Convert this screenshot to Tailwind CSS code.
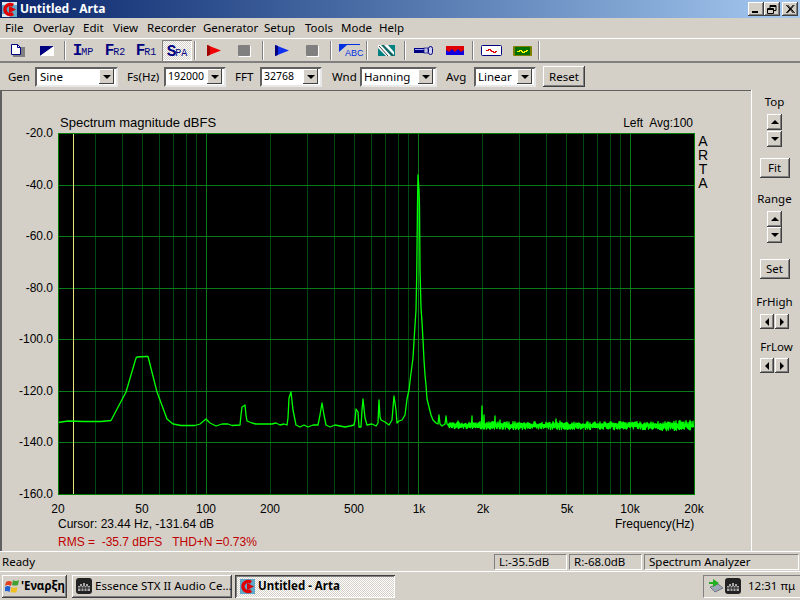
<!DOCTYPE html>
<html lang="en">
<head>
<meta charset="UTF-8">
<title>Untitled - Arta</title>
<script src="https://cdn.jsdelivr.net/npm/@tailwindcss/browser@4"></script>
</head>
<body class="m-0">
<div class="w-[800px] h-[600px] overflow-hidden flex flex-col bg-[#d4d0c8] text-black text-[11.5px] leading-none font-['Noto_Sans','Liberation_Sans',sans-serif]">

  <!-- title bar -->
  <div class="h-[18px] flex items-center pl-[2px] pr-[2px] bg-gradient-to-r from-[#0a246a] to-[#a6caf0]">
    <svg width="15" height="15" viewBox="0 0 15 15" class="mr-[3px]"><rect width="15" height="15" fill="#5fa8c8"/><path d="M0 0h15v3H0zM0 12h8v3H0z" fill="#d8e8f0"/><path d="M11 3.500A5 5 0 1 0 11 11.500" fill="none" stroke="#e00000" stroke-width="3.500"/><path d="M7 4l7 3.500L7 11z" fill="#e00000"/></svg>
    <span class="text-white font-bold text-[12px]">Untitled - Arta</span>
    <div class="ml-auto flex">
      <div class="w-[16px] h-[14px] bg-[#d4d0c8] shadow-[inset_-1px_-1px_0_#404040,inset_1px_1px_0_#fff,inset_-2px_-2px_0_#808080] relative"><div class="absolute left-[4px] top-[9px] w-[6px] h-[2px] bg-black"></div></div>
      <div class="w-[16px] h-[14px] bg-[#d4d0c8] shadow-[inset_-1px_-1px_0_#404040,inset_1px_1px_0_#fff,inset_-2px_-2px_0_#808080] flex items-center justify-center"><svg width="10" height="9" viewBox="0 0 10 9"><path d="M3 0.500h6v5H7M3 1.500h6M0.500 3.500h6v5h-6zM0.500 4.500h6M3 .5v3" fill="none" stroke="#000"/></svg></div>
      <div class="ml-[2px] w-[16px] h-[14px] bg-[#d4d0c8] shadow-[inset_-1px_-1px_0_#404040,inset_1px_1px_0_#fff,inset_-2px_-2px_0_#808080] flex items-center justify-center"><svg width="9" height="8" viewBox="0 0 9 8"><path d="M1 0l7 8M2.400 0l7 8M8 0L1 8M9 0L2 8" stroke="#000" fill="none" transform="translate(-.7 0)"/></svg></div>
    </div>
  </div>

  <!-- menu -->
  <div class="h-[21px] flex items-center pl-[5px] border-b border-white">
    <span class="w-[28px]">File</span><span class="w-[50px]">Overlay</span><span class="w-[30px]">Edit</span><span class="w-[34px]">View</span><span class="w-[56px]">Recorder</span><span class="w-[61px]">Generator</span><span class="w-[41px]">Setup</span><span class="w-[36px]">Tools</span><span class="w-[38px]">Mode</span><span>Help</span>
  </div>

  <!-- toolbar -->
  <div class="h-[24px] flex items-center pl-[2px] border-b-2 border-t border-t-[#d4d0c8] border-b-[#808080] text-[#000080]">
    <div class="w-[30px] flex justify-center"><svg width="15" height="13" viewBox="0 0 15 13"><path d="M3 3h12v10H3z" fill="#808080"/><path d="M1.500.5h6l3 3v7h-9z" fill="#fff" stroke="#000080"/><path d="M7.500.5v3h3" fill="none" stroke="#000080"/></svg></div>
    <div class="w-[30px] flex justify-center"><svg width="14" height="10" viewBox="0 0 14 10"><path d="M0 0h14L0 10z" fill="#000080"/><path d="M14 0v10H0z" fill="#fff"/></svg></div>
    <div class="w-[6px] flex justify-center"><div class="w-[2px] h-[19px] border-l border-l-[#808080] border-r border-r-white"></div></div>
    <div class="w-[30px] flex justify-center items-baseline font-bold font-['Liberation_Mono',monospace] text-[16px]">I<span class="text-[10px] font-normal -ml-[1px]">MP</span></div>
    <div class="w-[32px] ml-[1px] flex justify-center items-baseline font-bold font-['Liberation_Mono',monospace] text-[16px]">F<span class="text-[10px] font-normal -ml-[1px]">R2</span></div>
    <div class="w-[30px] flex justify-center items-baseline font-bold font-['Liberation_Mono',monospace] text-[16px]">F<span class="text-[10px] font-normal -ml-[1px]">R1</span></div>
    <div class="w-[30px] ml-[1px] h-[21px] flex justify-center items-baseline pt-[4px] font-bold font-['Liberation_Mono',monospace] text-[16px] bg-[repeating-conic-gradient(#fff_0_25%,#d4d0c8_0_50%)] bg-[length:2px_2px] shadow-[inset_1px_1px_0_#808080,inset_-1px_-1px_0_#fff]"><span>S</span><span class="text-[10px] font-normal -ml-[1px]">PA</span></div>
    <div class="w-[6px] flex justify-center"><div class="w-[2px] h-[19px] border-l border-l-[#808080] border-r border-r-white"></div></div>
    <div class="w-[31px] flex justify-center"><svg width="14" height="11" viewBox="0 0 14 11"><path d="M0 0l14 5.500L0 11z" fill="#f00000"/><path d="M0 0v11l3-1V1z" fill="#a00000"/></svg></div>
    <div class="w-[31px] flex justify-center"><svg width="13" height="12" viewBox="0 0 13 12"><rect x="1" y="1" width="12" height="11" fill="#fff"/><rect width="12" height="11" rx="1" fill="#808080"/></svg></div>
    <div class="w-[6px] flex justify-center"><div class="w-[2px] h-[19px] border-l border-l-[#808080] border-r border-r-white"></div></div>
    <div class="w-[31px] flex justify-center"><svg width="14" height="11" viewBox="0 0 14 11"><path d="M0 0l14 5.500L0 11z" fill="#1030f0"/><path d="M0 0v11l3-1V1z" fill="#000080"/></svg></div>
    <div class="w-[31px] flex justify-center"><svg width="13" height="12" viewBox="0 0 13 12"><rect x="1" y="1" width="12" height="11" fill="#fff"/><rect width="12" height="11" rx="1" fill="#808080"/></svg></div>
    <div class="w-[6px] flex justify-center"><div class="w-[2px] h-[19px] border-l border-l-[#808080] border-r border-r-white"></div></div>
    <div class="w-[31px] flex justify-center relative h-[14px]"><svg width="21" height="11" viewBox="0 0 21 11"><path d="M0 0v8L8 1h13V0z" fill="#0030e0"/></svg><span class="absolute left-[11px] top-[5px] text-[9px] text-[#0030e0] font-['Liberation_Sans',sans-serif]">ABC</span></div>
    <div class="w-[4px] flex justify-center"><div class="w-[2px] h-[19px] border-l border-l-[#808080] border-r border-r-white"></div></div>
    <div class="w-[34px] flex justify-center"><svg width="17" height="11" viewBox="0 0 17 11"><rect width="17" height="11" fill="#008080"/><path d="M0 3l8 8h5L3 0H0zM6 0l10 10V7L10 0z" fill="#fff"/><path d="M1 1l9 10M5 0l10 11" stroke="#404040" fill="none"/></svg></div>
    <div class="w-[4px] flex justify-center"><div class="w-[2px] h-[19px] border-l border-l-[#808080] border-r border-r-white"></div></div>
    <div class="w-[32px] flex justify-center"><svg width="19" height="9" viewBox="0 0 19 9"><rect y="2" width="10" height="5" fill="#000080"/><rect x="1" y="3" width="9" height="1" fill="#a0a0ff"/><rect x="10" y="2" width="4" height="5" fill="#c0c0e0" stroke="#000080" stroke-width=".7"/><rect x="14.500" y=".5" width="4" height="8" rx="2" fill="#d0d0f0" stroke="#000080"/></svg></div>
    <div class="w-[31px] flex justify-center"><svg width="18" height="9" viewBox="0 0 18 9"><rect width="18" height="9" fill="#e00000"/><path d="M0 9V4l3 2 3-3 3 3 3-3 3 3 3-2v5z" fill="#1000e0"/></svg></div>
    <div class="w-[6px] flex justify-center"><div class="w-[2px] h-[19px] border-l border-l-[#808080] border-r border-r-white"></div></div>
    <div class="w-[31px] flex justify-center"><svg width="21" height="11" viewBox="0 0 21 11"><rect x=".5" y=".5" width="20" height="10" rx="1" fill="#fff" stroke="#000080"/><path d="M5 6V5h2v-1h2v1h1v1h2v1h2v-1h2" fill="none" stroke="#e00000" shape-rendering="crispEdges"/></svg></div>
    <div class="w-[30px] flex justify-center"><svg width="19" height="10" viewBox="0 0 19 10"><rect width="19" height="10" rx="1" fill="#808000"/><rect x="2" y="1" width="15" height="8" fill="#007000"/><path d="M4 6V5h2v-1h2v1h1v1h2v-1h2v-1h2" fill="none" stroke="#ffff00" shape-rendering="crispEdges"/></svg></div>
    <div class="w-[4px] flex justify-center"><div class="w-[2px] h-[19px] border-l border-l-[#808080] border-r border-r-white"></div></div>
  </div>

  <!-- settings bar -->
  <div class="h-[27px] flex items-center pl-[8px]">
    <span class="w-[27px]">Gen</span>
    <div class="w-[83px] h-[20px] bg-white flex items-center justify-between pl-[3px] pr-[2px] border-2 border-t-[#606060] border-l-[#606060] border-r-[#e8e8e8] border-b-[#e8e8e8]"><span>Sine</span><div class="w-[15px] h-[15px] bg-[#d4d0c8] shadow-[inset_-1px_-1px_0_#404040,inset_1px_1px_0_#fff] flex items-center justify-center"><div class="w-0 h-0 border-x-[4px] border-x-transparent border-t-[4px] border-t-black"></div></div></div>
    <span class="ml-[9px] w-[37px]">Fs(Hz)</span>
    <div class="w-[62px] h-[20px] bg-white flex items-center justify-between pl-[2px] pr-[2px] border-2 border-t-[#606060] border-l-[#606060] border-r-[#e8e8e8] border-b-[#e8e8e8]"><span class="text-[10.5px]">192000</span><div class="w-[15px] h-[15px] bg-[#d4d0c8] shadow-[inset_-1px_-1px_0_#404040,inset_1px_1px_0_#fff] flex items-center justify-center"><div class="w-0 h-0 border-x-[4px] border-x-transparent border-t-[4px] border-t-black"></div></div></div>
    <span class="ml-[9px] w-[25px]">FFT</span>
    <div class="w-[62px] h-[20px] bg-white flex items-center justify-between pl-[2px] pr-[2px] border-2 border-t-[#606060] border-l-[#606060] border-r-[#e8e8e8] border-b-[#e8e8e8]"><span class="text-[10.5px]">32768</span><div class="w-[15px] h-[15px] bg-[#d4d0c8] shadow-[inset_-1px_-1px_0_#404040,inset_1px_1px_0_#fff] flex items-center justify-center"><div class="w-0 h-0 border-x-[4px] border-x-transparent border-t-[4px] border-t-black"></div></div></div>
    <span class="ml-[10px] w-[28px]">Wnd</span>
    <div class="w-[77px] h-[20px] bg-white flex items-center justify-between pl-[2px] pr-[2px] border-2 border-t-[#606060] border-l-[#606060] border-r-[#e8e8e8] border-b-[#e8e8e8]"><span>Hanning</span><div class="w-[15px] h-[15px] bg-[#d4d0c8] shadow-[inset_-1px_-1px_0_#404040,inset_1px_1px_0_#fff] flex items-center justify-center"><div class="w-0 h-0 border-x-[4px] border-x-transparent border-t-[4px] border-t-black"></div></div></div>
    <span class="ml-[9px] w-[28px]">Avg</span>
    <div class="w-[62px] h-[20px] bg-white flex items-center justify-between pl-[2px] pr-[2px] border-2 border-t-[#606060] border-l-[#606060] border-r-[#e8e8e8] border-b-[#e8e8e8]"><span>Linear</span><div class="w-[15px] h-[15px] bg-[#d4d0c8] shadow-[inset_-1px_-1px_0_#404040,inset_1px_1px_0_#fff] flex items-center justify-center"><div class="w-0 h-0 border-x-[4px] border-x-transparent border-t-[4px] border-t-black"></div></div></div>
    <div class="ml-[7px] w-[42px] h-[21px] flex items-center justify-center shadow-[inset_-1px_-1px_0_#404040,inset_1px_1px_0_#fff,inset_-2px_-2px_0_#808080]">Reset</div>
  </div>

  <!-- main -->
  <div class="h-[462px] flex border-b border-white">
    <svg width="751" height="461" viewBox="0 90 751 461" class="border-0 shrink-0 font-['Liberation_Sans',sans-serif]">
      <rect x="0" y="90" width="751" height="461" fill="#d4d0c8"/>
      <path d="M0 90.500H751M.5 90V551M1.500 91V551" stroke="#606060" fill="none"/>
      <rect x="58" y="133" width="636" height="361" fill="#000"/>
      <g id="grid" shape-rendering="crispEdges"></g>
      <path d="M73.500 133V494" stroke="#e6e67a" shape-rendering="crispEdges"/>
      <polyline id="trace" fill="none" stroke="#00ff00" stroke-width="1.300" stroke-linejoin="round"/>
      <rect x="58" y="133" width="636" height="361" fill="none" stroke="#008000" stroke-width="1" shape-rendering="crispEdges"/>
      <g fill="#000">
        <text x="60" y="127" font-size="13">Spectrum magnitude dBFS</text>
        <text x="693" y="127" text-anchor="end" font-size="12" xml:space="preserve">Left  Avg:100</text>
        <text x="703" y="133" font-size="14" class="[writing-mode:vertical-rl] [text-orientation:upright] tracking-[-2px]">ARTA</text>
      </g>
      <g font-size="12" fill="#000" text-anchor="end">
        <text x="53" y="137">-20.0</text><text x="53" y="189">-40.0</text><text x="53" y="240">-60.0</text><text x="53" y="292">-80.0</text><text x="53" y="343">-100.0</text><text x="53" y="395">-120.0</text><text x="53" y="446">-140.0</text><text x="53" y="498">-160.0</text>
      </g>
      <g font-size="12" fill="#000" text-anchor="middle">
        <text x="58" y="513">20</text><text x="142" y="513">50</text><text x="206" y="513">100</text><text x="270" y="513">200</text><text x="354" y="513">500</text><text x="419" y="513">1k</text><text x="483" y="513">2k</text><text x="567" y="513">5k</text><text x="630" y="513">10k</text><text x="694" y="513">20k</text>
      </g>
      <text x="58" y="528" font-size="12">Cursor: 23.44 Hz, -131.64 dB</text>
      <text x="615" y="528" font-size="12">Frequency(Hz)</text>
      <text x="58" y="546" font-size="12" fill="#c00000" xml:space="preserve">RMS =  -35.7 dBFS   THD+N =0.73%</text>
    </svg>
    <!-- right panel -->
    <div class="w-[49px] border-l border-white flex flex-col items-center pr-[3px]">
      <span class="mt-[6px] h-[12px]">Top</span>
      <div class="mt-[6px] w-[15px] h-[16px] shadow-[inset_-1px_-1px_0_#404040,inset_1px_1px_0_#fff,inset_-2px_-2px_0_#808080] flex items-center justify-center"><div class="w-0 h-0 border-x-[4px] border-x-transparent border-b-[4px] border-b-black"></div></div>
      <div class="mt-[1px] w-[15px] h-[16px] shadow-[inset_-1px_-1px_0_#404040,inset_1px_1px_0_#fff,inset_-2px_-2px_0_#808080] flex items-center justify-center"><div class="w-0 h-0 border-x-[4px] border-x-transparent border-t-[4px] border-t-black"></div></div>
      <div class="mt-[11px] w-[30px] h-[20px] shadow-[inset_-1px_-1px_0_#404040,inset_1px_1px_0_#fff,inset_-2px_-2px_0_#808080] flex items-center justify-center">Fit</div>
      <span class="mt-[15px] h-[12px]">Range</span>
      <div class="mt-[6px] w-[15px] h-[16px] shadow-[inset_-1px_-1px_0_#404040,inset_1px_1px_0_#fff,inset_-2px_-2px_0_#808080] flex items-center justify-center"><div class="w-0 h-0 border-x-[4px] border-x-transparent border-b-[4px] border-b-black"></div></div>
      <div class="w-[15px] h-[16px] shadow-[inset_-1px_-1px_0_#404040,inset_1px_1px_0_#fff,inset_-2px_-2px_0_#808080] flex items-center justify-center"><div class="w-0 h-0 border-x-[4px] border-x-transparent border-t-[4px] border-t-black"></div></div>
      <div class="mt-[16px] w-[30px] h-[20px] shadow-[inset_-1px_-1px_0_#404040,inset_1px_1px_0_#fff,inset_-2px_-2px_0_#808080] flex items-center justify-center">Set</div>
      <span class="mt-[17px] h-[12px]">FrHigh</span>
      <div class="mt-[6px] flex gap-[1px]">
        <div class="w-[14px] h-[15px] shadow-[inset_-1px_-1px_0_#404040,inset_1px_1px_0_#fff,inset_-2px_-2px_0_#808080] flex items-center justify-center"><div class="w-0 h-0 border-y-[4px] border-y-transparent border-r-[4px] border-r-black"></div></div>
        <div class="w-[14px] h-[15px] shadow-[inset_-1px_-1px_0_#404040,inset_1px_1px_0_#fff,inset_-2px_-2px_0_#808080] flex items-center justify-center"><div class="w-0 h-0 border-y-[4px] border-y-transparent border-l-[4px] border-l-black"></div></div>
      </div>
      <span class="mt-[12px] h-[12px] ml-[4px]">FrLow</span>
      <div class="mt-[5px] flex gap-[1px]">
        <div class="w-[14px] h-[15px] shadow-[inset_-1px_-1px_0_#404040,inset_1px_1px_0_#fff,inset_-2px_-2px_0_#808080] flex items-center justify-center"><div class="w-0 h-0 border-y-[4px] border-y-transparent border-r-[4px] border-r-black"></div></div>
        <div class="w-[14px] h-[15px] shadow-[inset_-1px_-1px_0_#404040,inset_1px_1px_0_#fff,inset_-2px_-2px_0_#808080] flex items-center justify-center"><div class="w-0 h-0 border-y-[4px] border-y-transparent border-l-[4px] border-l-black"></div></div>
      </div>
    </div>
  </div>

  <!-- status bar -->
  <div class="h-[20px] flex items-center border-b border-white">
    <span class="ml-[2px] w-[492px]">Ready</span>
    <div class="w-[73px] h-[16px] flex items-center pl-[4px] border border-t-[#808080] border-l-[#808080] border-r-white border-b-white">L:-35.5dB</div>
    <div class="ml-[2px] w-[73px] h-[16px] flex items-center pl-[4px] border border-t-[#808080] border-l-[#808080] border-r-white border-b-white">R:-68.0dB</div>
    <div class="ml-[2px] w-[155px] h-[16px] flex items-center pl-[4px] border border-t-[#808080] border-l-[#808080] border-r-white border-b-white">Spectrum Analyzer</div>
  </div>

  <!-- taskbar -->
  <div class="flex-1 flex items-center pl-[2px]">
    <div class="w-[65px] h-[23px] flex items-center pl-[3px] gap-[1px] font-bold shadow-[inset_-1px_-1px_0_#404040,inset_1px_1px_0_#fff,inset_-2px_-2px_0_#808080]">
      <svg width="15" height="14" viewBox="0 0 15 14"><path d="M1 3q3-2 6 0l-1 4q-3-2-6 0z" fill="#e04020"/><path d="M8 1q3 2 6 0l-1 5q-3 1-6-0z" fill="#40a030"/><path d="M0 8q3-2 5.500 0l-1 5q-3-2-6 0z" fill="#2060d0"/><path d="M6.500 8q3 1.500 6 0l-1 5q-3 1-6 0z" fill="#f0c020"/></svg>
      <span>'Εναρξη</span>
    </div>
    <div class="ml-[5px] w-[160px] h-[23px] flex items-center pl-[4px] gap-[3px] shadow-[inset_-1px_-1px_0_#404040,inset_1px_1px_0_#fff,inset_-2px_-2px_0_#808080]">
      <svg width="16" height="16" viewBox="0 0 16 16"><rect width="16" height="16" rx="3" fill="#222"/><path d="M2 8h12v5H2zM4 6h2v2H4zM7 5h2v3H7zM10 6h2v2h-2z" fill="#aaa"/><path d="M2 10h12M5 8v5M8 8v5M11 8v5" stroke="#222"/></svg>
      <span class="whitespace-nowrap">Essence STX II Audio Ce...</span>
    </div>
    <div class="ml-[3px] w-[160px] h-[23px] flex items-center pl-[5px] gap-[3px] font-bold bg-[repeating-conic-gradient(#fff_0_25%,#d4d0c8_0_50%)] bg-[length:2px_2px] shadow-[inset_1px_1px_0_#404040,inset_-1px_-1px_0_#fff,inset_2px_2px_0_#808080]">
      <svg width="15" height="15" viewBox="0 0 15 15"><rect width="15" height="15" fill="#5fa8c8"/><path d="M11 3.500A5 5 0 1 0 11 11.500" fill="none" stroke="#e00000" stroke-width="3.500"/><path d="M7 4l7 3.500L7 11z" fill="#e00000"/></svg>
      <span>Untitled - Arta</span>
    </div>
    <div class="ml-auto w-[97px] h-[23px] flex items-center pl-[4px] border border-t-[#808080] border-l-[#808080] border-r-0 border-b-white">
      <svg width="16" height="16" viewBox="0 0 16 16"><path d="M2 9l8-3 5 4-8 4z" fill="#a0a8b8" stroke="#505868" stroke-width=".7"/><path d="M1 4h4V1l6 4-6 4V6H1z" fill="#20b020"/></svg>
      <svg width="16" height="16" viewBox="0 0 16 16" class="ml-[1px]"><rect width="16" height="16" rx="3" fill="#222"/><path d="M2 8h12v5H2zM4 6h2v2H4zM7 5h2v3H7zM10 6h2v2h-2z" fill="#aaa"/><path d="M2 10h12M5 8v5M8 8v5M11 8v5" stroke="#222"/></svg>
      <span class="ml-[7px]">12:31 πμ</span>
    </div>
  </div>
</div>

<script>
    // grid
    const gridEl = document.getElementById("grid");
    const NS = "http://www.w3.org/2000/svg";
    function addLine(x1, y1, x2, y2, color) {
        const l = document.createElementNS(NS, "line");
        l.setAttribute("x1", x1); l.setAttribute("y1", y1);
        l.setAttribute("x2", x2); l.setAttribute("y2", y2);
        l.setAttribute("stroke", color);
        gridEl.appendChild(l);
    }
    const xOf = f => 58.5 + 212 * Math.log10(f / 20);
    [30,40,50,60,70,80,90,200,300,400,500,600,700,800,900,2000,3000,4000,5000,6000,7000,8000,9000].forEach(f => {
        const x = Math.floor(xOf(f)) + 0.5;
        addLine(x, 133, x, 494, "#004a10");
    });
    [100,1000,10000].forEach(f => {
        const x = Math.floor(xOf(f)) + 0.5;
        addLine(x, 133, x, 494, "#0a7a1a");
    });
    [185,236,288,339,391,442].forEach(y => addLine(58, y + 0.5, 694, y + 0.5, "#0a7a1a"));

    // trace up to just past the 1k peak
    const pts = [[58,422.5],[68,421],[84,421.5],[101,421.5],[111,420.5],[126,392],[136,358],[137,357],[146,356.5],[148,356.5],[157,392],[167,419],[173,424],[181,425.5],[195,425.5],[200,424],[206,419],[210,423],[216,426],[222,424],[228,424],[232,425.5],[240,425],[241,415],[242,407],[245,405],[246,415],[247,421],[252,423],[256,424],[262,424],[268,424],[272,424],[276,423],[280,425],[284,424],[287,425],[288,418],[289,398],[291,392],[293,410],[296,425],[300,427],[304,425],[308,427],[313,425],[318,425],[320,415],[322,403],[324,415],[326,425],[330,427],[335,425],[340,426],[345,427],[350,426],[354,425],[355,420],[356,409],[358,412],[359,427],[361,427],[362,410],[363,399],[365,418],[367,425],[372,424],[376,426],[378,423],[379,400],[380,417],[381,420],[385,422],[389,425],[392,420],[394,396],[396,410],[397,423],[399,421],[402,420],[405,415],[407,399],[409,390],[411,373],[413,358],[414.5,333],[416,310],[416.7,277],[417.5,204],[418,175],[419,190],[419.5,205],[420,269],[421,308],[422,322],[423,340],[424,360],[425,375],[426,385],[427,399],[429,407],[431,415],[433,420],[436,423],[438,424],[439,415],[440,424],[442,426],[445,424],[446,416],[447,424]];

    // noise floor, fixed seed so every run gives the same picture
    let seed = 12345;
    function rnd() { seed = (seed * 1664525 + 1013904223) % 4294967296; return seed / 4294967296; }
    const spikes = {452:423, 458:421, 472:416, 482:406, 484:415, 495:416, 500:420, 556:419, 560:421, 600:422, 640:422, 668:422, 676:421, 684:422};
    for (let x = 448; x <= 693; x++) {
        const amp = x < 480 ? 2.5 : x < 660 ? 3.5 : 4.5;
        pts.push([x, spikes[x] || 425.5 - 0.6 - rnd() * amp]);
        pts.push([x + 0.4, 425.5 + 0.6 + rnd() * amp]);
    }
    document.getElementById("trace").setAttribute("points", pts.map(p => p.join(",")).join(" "));
</script>
</body>
</html>
